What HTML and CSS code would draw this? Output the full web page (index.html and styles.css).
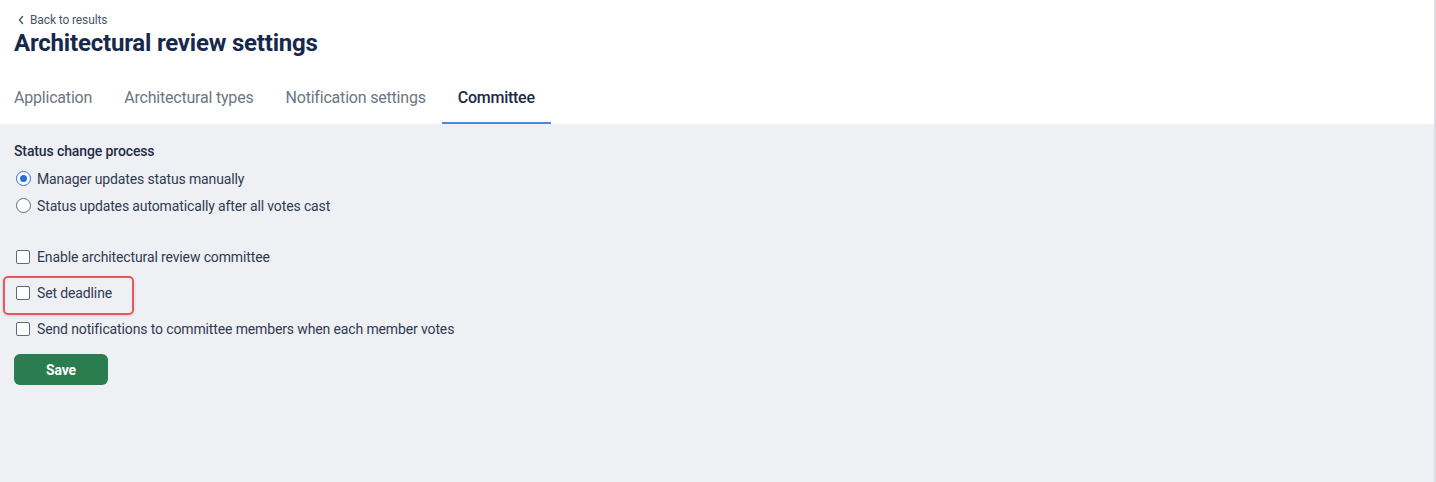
FILE: index.html
```html
<!DOCTYPE html>
<html lang="en">
<head>
<meta charset="utf-8">
<title>Architectural review settings</title>
<link rel="stylesheet" href="styles.css">
</head>
<body>
<div class="page">
  <header class="header">
    <a class="back" href="#">
      <svg class="chev" width="8" height="10" viewBox="0 0 8 10" aria-hidden="true"><path d="M5.5 1.5 L2.5 5 L5.5 8.5" fill="none" stroke="#4a5568" stroke-width="1.4" stroke-linecap="round" stroke-linejoin="round"/></svg>
      <span>Back to results</span>
    </a>
    <h1 class="title">Architectural review settings</h1>
    <nav class="tabs">
      <a class="tab" href="#">Application</a>
      <a class="tab" href="#">Architectural types</a>
      <a class="tab" href="#">Notification settings</a>
      <a class="tab active" href="#">Committee</a>
    </nav>
  </header>
  <main class="content">
    <div class="section-title">Status change process</div>
    <div class="radio-group">
      <label class="row radio-row"><span class="radio checked"></span><span>Manager updates status manually</span></label>
      <label class="row radio-row"><span class="radio"></span><span>Status updates automatically after all votes cast</span></label>
    </div>
    <div class="check-group">
      <label class="row check-row"><span class="checkbox"></span><span>Enable architectural review committee</span></label>
      <label class="row check-row highlighted"><span class="checkbox"></span><span>Set deadline</span></label>
      <label class="row check-row last"><span class="checkbox"></span><span>Send notifications to committee members when each member votes</span></label>
    </div>
    <button class="save" type="button">Save</button>
  </main>
</div>
</body>
</html>
```

FILE: styles.css
```css
* { box-sizing: border-box; }
html, body { margin: 0; padding: 0; }
body {
  font-family: Roboto, "Liberation Sans", Arial, sans-serif;
  background: #eff0f4;
  color: #2f3b52;
}
.page {
  width: 1436px;
  height: 482px;
  border-right: 2px solid #dcdee3;
  display: flex;
  flex-direction: column;
}
.header {
  background: #ffffff;
  padding: 12px 0 0 14px;
}
.back {
  display: flex;
  align-items: center;
  gap: 5px;
  margin-left: 3px;
  height: 16px;
  font-size: 12px;
  line-height: 16px;
  color: #4a5568;
  text-decoration: none;
  letter-spacing: -0.12px;
}
.chev { display: block; }
.title {
  margin: 0;
  font-size: 24px;
  line-height: 30px;
  font-weight: 700;
  color: #17294a;
  letter-spacing: -0.2px;
}
.tabs {
  display: flex;
  margin-top: 16px;
  margin-left: -16px;
}
.tab {
  padding: 14px 16px 14px;
  font-size: 16px;
  line-height: 20px;
  color: #6b7684;
  text-decoration: none;
  border-bottom: 2px solid transparent;
  letter-spacing: -0.2px;
}
.tab.active {
  color: #1c2a45;
  font-weight: 500;
  border-bottom-color: #4d89d8;
  letter-spacing: -0.25px;
}
.content {
  flex: 1;
  padding: 17px 14px 0 14px;
}
.section-title {
  font-size: 14px;
  line-height: 20px;
  font-weight: 500;
  color: #1f2d47;
  letter-spacing: -0.12px;
}
.radio-group {
  margin-top: 4px;
  margin-bottom: 20px;
}
.row {
  display: flex;
  align-items: center;
  gap: 7px;
  font-size: 14px;
  color: #2f3b52;
  padding-left: 2px;
  letter-spacing: -0.13px;
}
.radio-row { height: 27px; gap: 6px; }
.check-row { height: 36px; }
.check-row.last { height: 35px; }
.radio {
  width: 15px;
  height: 15px;
  border-radius: 50%;
  border: 1.5px solid #5f6a7a;
  background: #fff;
  display: flex;
  align-items: center;
  justify-content: center;
}
.radio.checked { border-color: #2f6fd4; }
.radio.checked::after {
  content: "";
  width: 7px;
  height: 7px;
  border-radius: 50%;
  background: #2f6fd4;
}
.checkbox {
  width: 14px;
  height: 14px;
  border: 1.5px solid #5c6b80;
  border-radius: 2px;
  background: #fff;
}
.highlighted { position: relative; }
.highlighted::before {
  content: "";
  position: absolute;
  left: -11px;
  top: 1px;
  width: 127px;
  height: 35px;
  border: 2px solid #e8575a;
  border-radius: 5px;
  box-shadow: 0 1px 3px rgba(0,0,0,0.15);
  pointer-events: none;
}
.save {
  margin-top: 8px;
  width: 94px;
  height: 31px;
  border: none;
  border-radius: 6px;
  background: #2a7d4f;
  color: #ffffff;
  font-family: Roboto, "Liberation Sans", Arial, sans-serif;
  font-size: 14px;
  font-weight: 700;
  letter-spacing: -0.2px;
  cursor: pointer;
}
```
